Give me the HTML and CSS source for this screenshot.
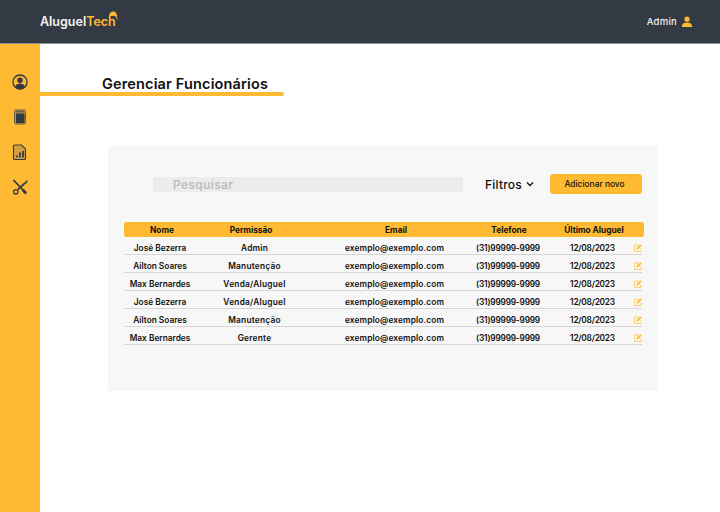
FILE: index.html
```html
<!DOCTYPE html>
<html lang="pt-BR">
<head>
<meta charset="utf-8">
<title>Gerenciar Funcionários</title>
<link rel="stylesheet" href="styles.css">
</head>
<body>
<svg class="defs" aria-hidden="true"><symbol id="edit" viewBox="0 0 10 10"><path d="M8.700 5.500V9.400H.6V1.300h5.400" fill="none" stroke="#ffcc66" stroke-width="1.200"/><path d="M3 7l.5-2.200L8 .3 9.700 2 5.200 6.500Z" fill="#ffba33"/></symbol></svg>
<header class="topbar">
  <div class="brand"><span class="brand-a">Aluguel</span><span class="brand-b">Tech</span>
    <svg class="helmet" viewBox="0 0 10 9"><path d="M1 5.200C1 2.400 3 .6 5.200.6S9.200 2.600 9.200 5.600L7 5.500 6.400 4.800Z" fill="#ffba33"/><path d="M8 5.600l1.600 2.800" stroke="#ffba33" stroke-width="1"/></svg>
  </div>
  <div class="user"><span>Admin</span>
    <svg class="user-icon" viewBox="0 0 12 12"><circle cx="6" cy="3.200" r="2.600" fill="#ffba33"/><path d="M.8 11c0-3 2-4.400 5.200-4.400s5.200 1.400 5.200 4.400Z" fill="#ffba33"/></svg>
  </div>
</header>
<div class="layout">
  <nav class="sidebar">
    <svg class="nav-icon" viewBox="0 0 16 16"><circle cx="8" cy="8" r="7" fill="none" stroke="#343a44" stroke-width="1.300"/><circle cx="8" cy="6.200" r="2.700" fill="#343a44"/><path d="M3.200 12.800c.6-2.400 2.500-3.300 4.800-3.300s4.200.9 4.800 3.300C11.500 14.200 10 15 8 15s-3.500-.8-4.800-2.200Z" fill="#343a44"/></svg>
    <svg class="nav-icon" viewBox="0 0 16 16"><rect x="2.500" y="1" width="11" height="14" rx="1.500" fill="#b8914a" stroke="#6b5c40" stroke-width="1"/><rect x="4" y="4.500" width="8.500" height="9.500" fill="#343a44"/><path d="M4 2.800h8" stroke="#343a44" stroke-width=".8"/></svg>
    <svg class="nav-icon" viewBox="0 0 16 16"><path d="M2.500 1h7l4 4v9.500a1 1 0 0 1-1 1h-10a1 1 0 0 1-1-1V2a1 1 0 0 1 1-1Z" fill="#d6a040" stroke="#343a44" stroke-width="1.100"/><path d="M5 13.500v-2M8 13.500V8.500M11 13.500v-6.500" stroke="#343a44" stroke-width="1.800"/></svg>
    <svg class="nav-icon" viewBox="0 0 16 16"><path d="M1.500 1l9 9.500" stroke="#343a44" stroke-width="1.800" fill="none"/><path d="M15 1.500c-.2 1.800-1.300 2.500-2.800 3.300L5.800 10.500" stroke="#343a44" stroke-width="1.800" fill="none"/><circle cx="3.800" cy="12.800" r="2.200" fill="none" stroke="#343a44" stroke-width="1.300"/><path d="M10.500 10.500l3.600 4" stroke="#343a44" stroke-width="2.800"/></svg>
  </nav>
  <main class="content">
    <h1 class="title">Gerenciar Funcionários</h1>
    <div class="title-bar"></div>
    <section class="panel">
      <div class="toolbar">
        <div class="search">Pesquisar</div>
        <div class="filters">Filtros
          <svg class="chevron" viewBox="0 0 8 6"><path d="M1 1.500l3 3 3-3" fill="none" stroke="#111" stroke-width="1.300"/></svg>
        </div>
        <button class="add">Adicionar novo</button>
      </div>
      <div class="table">
        <div class="head"><span>Nome</span><span>Permissão</span><span class="head-email">Email</span><span>Telefone</span><span>Último Aluguel</span><span></span></div>
        <div class="row"><span>José Bezerra</span><span class="perm">Admin</span><span class="mail">exemplo@exemplo.com</span><span class="phone">(31)99999-9999</span><span class="date">12/08/2023</span><svg class="edit"><use href="#edit"/></svg></div>
        <div class="row"><span>Ailton Soares</span><span class="perm">Manutenção</span><span class="mail">exemplo@exemplo.com</span><span class="phone">(31)99999-9999</span><span class="date">12/08/2023</span><svg class="edit"><use href="#edit"/></svg></div>
        <div class="row"><span>Max Bernardes</span><span class="perm">Venda/Aluguel</span><span class="mail">exemplo@exemplo.com</span><span class="phone">(31)99999-9999</span><span class="date">12/08/2023</span><svg class="edit"><use href="#edit"/></svg></div>
        <div class="row"><span>José Bezerra</span><span class="perm">Venda/Aluguel</span><span class="mail">exemplo@exemplo.com</span><span class="phone">(31)99999-9999</span><span class="date">12/08/2023</span><svg class="edit"><use href="#edit"/></svg></div>
        <div class="row"><span>Ailton Soares</span><span class="perm">Manutenção</span><span class="mail">exemplo@exemplo.com</span><span class="phone">(31)99999-9999</span><span class="date">12/08/2023</span><svg class="edit"><use href="#edit"/></svg></div>
        <div class="row"><span>Max Bernardes</span><span class="perm">Gerente</span><span class="mail">exemplo@exemplo.com</span><span class="phone">(31)99999-9999</span><span class="date">12/08/2023</span><svg class="edit"><use href="#edit"/></svg></div>
      </div>
    </section>
  </main>
</div>
</body>
</html>
```
FILE: styles.css
```css
* { box-sizing: border-box; }
html, body { margin: 0; height: 100%; overflow: hidden; }
body { font-family: "Inter", "Liberation Sans", sans-serif; background: #fff; color: #111; }
.defs { display: none; }

.topbar {
  height: 44px; background: #343a44; border-bottom: 1px solid #8f9297;
  display: flex; align-items: center; justify-content: space-between;
  padding: 0 27px 0 40px;
}
.brand { font-size: 12.500px; font-weight: 600; position: relative; }
.brand-a { color: #f4f4f4; }
.brand-b { color: #ffba33; }
.helmet { position: absolute; right: -2px; top: -3px; width: 10px; height: 9px; }
.user { display: flex; align-items: center; gap: 4px; color: #f2f2f2; font-size: 9.500px; font-weight: 500; letter-spacing: .25px; }
.user-icon { width: 12px; height: 12px; }

.layout { display: flex; height: 468px; }
.sidebar {
  width: 40px; background: #ffba33; flex: none;
  display: flex; flex-direction: column; align-items: center; gap: 19px; padding-top: 30px;
}
.nav-icon { width: 16px; height: 16px; flex: none; }

.content { flex: 1; }
.title { margin: 31px 0 0 62px; font-size: 14.500px; line-height: 18px; font-weight: 600; color: #111; letter-spacing: .15px; }
.title-bar { width: 244px; height: 4px; background: #ffba33; border-radius: 0 3px 3px 0; margin-top: -1px; }

.panel { margin: 50px 0 0 68px; width: 550px; height: 245px; background: #f7f7f7; border-radius: 2px; padding: 28px 16px 0; }
.toolbar { display: flex; align-items: center; height: 20px; padding-left: 29px; }
.search { width: 310px; height: 15px; background: #ececec; border-radius: 2px; padding-left: 20px; font-size: 12px; line-height: 15px; font-weight: 500; color: #b8b8b8; letter-spacing: .4px; }
.filters { margin-left: 22px; width: 65px; font-size: 12px; font-weight: 500; display: flex; align-items: center; gap: 4px; letter-spacing: .2px; }
.chevron { width: 8px; height: 6px; }
.add { width: 92px; height: 20px; border: 0; border-radius: 3px; background: #ffba33; padding: 0 3px 0 0; font: 500 8.400px "Inter", "Liberation Sans", sans-serif; color: #111; }

.table { margin-top: 28px; width: 520px; }
.head, .row { display: grid; align-items: center; text-align: center; font-size: 8.300px; color: #111; white-space: nowrap; }
.head {
  grid-template-columns: 76px 102px 160px 94px 76px 12px;
  height: 15px; background: #ffba33; border-radius: 2px; font-weight: 700;
}
.head-email { padding-left: 28px; }
.row {
  grid-template-columns: 72px 117px 163px 64px 90px 12px;
  width: 518px; height: 18px; padding-top: 4px;
  font-weight: 600; border-bottom: 1px solid #d6d6d6;
}
.perm { letter-spacing: .25px; }
.mail { letter-spacing: .15px; }
.phone { letter-spacing: -.2px; }
.date { letter-spacing: -.2px; padding-left: 15px; }
.edit { width: 8px; height: 8px; justify-self: end; }
```
